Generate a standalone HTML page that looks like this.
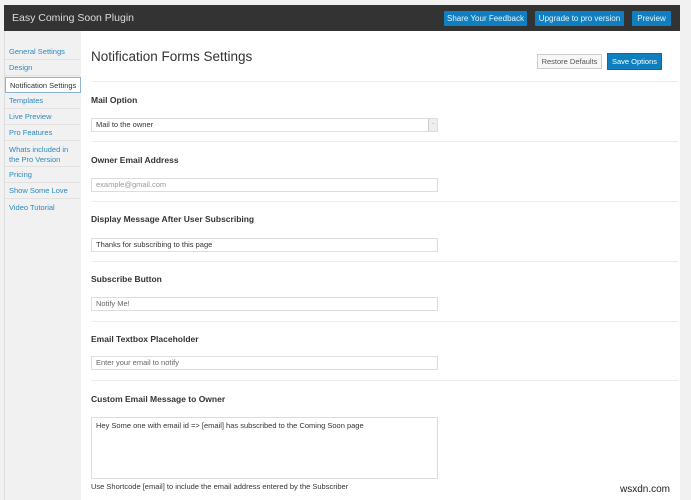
<!DOCTYPE html>
<html><head><style>
*{margin:0;padding:0;box-sizing:border-box}
body{width:691px;height:500px;background:#f1f1f1;font-family:"Liberation Sans",sans-serif;position:relative;overflow:hidden;color:#222}
.abs{position:absolute}
.bar{left:4px;top:5px;width:676px;height:26px;background:#333;}
.bar .t{left:8px;top:7px;color:#ddd;font-size:10.5px}
.tb{top:11px;height:15px;background:#0f7fbf;color:#e8f4fb;font-size:8px;line-height:15px;text-align:center;border-radius:1px}
.side{left:4px;top:31px;width:77px;height:469px;background:#f1f1f1;border-left:1px solid #ddd}
.nav{left:5px;width:75px;font-size:7.5px;color:#2a88bd;padding-left:4px;border-bottom:1px solid #e2e2e2;line-height:15px;height:16px}
.content{left:81px;top:31px;width:599px;height:469px;background:#fff}
h1{position:absolute;left:91px;top:49px;font-size:13.5px;font-weight:normal;color:#333}
.hr{left:91px;width:587px;height:1px;background:#ececec}
.lbl{left:91px;font-size:8.5px;font-weight:bold;color:#333}
.inp{left:91px;width:347px;height:14px;border:1px solid #ddd;font-size:7.5px;padding-left:4px;line-height:12px;color:#333;background:#fff}
</style></head><body>
<div class="abs bar"><div class="abs t">Easy Coming Soon Plugin</div></div>
<div class="abs tb" style="left:444px;width:83px">Share Your Feedback</div>
<div class="abs tb" style="left:535px;width:89px">Upgrade to pro version</div>
<div class="abs tb" style="left:632px;width:39px">Preview</div>
<div class="abs side"></div>
<div class="abs nav" style="top:44px">General Settings</div>
<div class="abs nav" style="top:60px">Design</div>
<div class="abs nav" style="top:77px;background:#fff;color:#333;border:1px solid #8ab6d6;width:76px">Notification Settings</div>
<div class="abs nav" style="top:93px">Templates</div>
<div class="abs nav" style="top:109px">Live Preview</div>
<div class="abs nav" style="top:125px">Pro Features</div>
<div class="abs nav" style="top:142px;height:25px;line-height:10px;padding-top:3px">Whats included in the Pro Version</div>
<div class="abs nav" style="top:167px">Pricing</div>
<div class="abs nav" style="top:183px">Show Some Love</div>
<div class="abs nav" style="top:200px;border:none">Video Tutorial</div>
<div class="abs content"></div>
<h1>Notification Forms Settings</h1>
<div class="abs" style="left:537px;top:54px;width:65px;height:15px;border:1px solid #ccc;background:#f7f7f7;font-size:7.5px;line-height:13px;text-align:center;color:#555">Restore Defaults</div>
<div class="abs" style="left:607px;top:53px;width:55px;height:17px;background:#0f7fbf;border:1px solid #0b6aa0;font-size:7.5px;line-height:15px;text-align:center;color:#fff">Save Options</div>
<div class="abs hr" style="top:81px"></div>
<div class="abs lbl" style="top:95px">Mail Option</div>
<div class="abs inp" style="top:118px">Mail to the owner<div class="abs" style="right:0;top:0;width:9px;height:12px;background:#eee;border-left:1px solid #ccc;font-size:6px;text-align:center;line-height:11px">·</div></div>
<div class="abs hr" style="top:141px"></div>
<div class="abs lbl" style="top:155px">Owner Email Address</div>
<div class="abs inp" style="top:178px;color:#999">example@gmail.com</div>
<div class="abs hr" style="top:201px"></div>
<div class="abs lbl" style="top:214px">Display Message After User Subscribing</div>
<div class="abs inp" style="top:238px">Thanks for subscribing to this page</div>
<div class="abs hr" style="top:261px"></div>
<div class="abs lbl" style="top:274px">Subscribe Button</div>
<div class="abs inp" style="top:297px;color:#666">Notify Me!</div>
<div class="abs hr" style="top:321px"></div>
<div class="abs lbl" style="top:334px">Email Textbox Placeholder</div>
<div class="abs inp" style="top:356px;color:#666">Enter your email to notify</div>
<div class="abs hr" style="top:380px"></div>
<div class="abs lbl" style="top:394px">Custom Email Message to Owner</div>
<div class="abs inp" style="top:417px;height:62px;padding-top:2px">Hey Some one with email id =&gt; [email] has subscribed to the Coming Soon page</div>
<div class="abs" style="left:91px;top:482px;font-size:7.5px;color:#333">Use Shortcode [email] to include the email address entered by the Subscriber</div>
<div class="abs" style="left:620px;top:484px;font-size:10px;color:#222">wsxdn.com</div>
</body></html>
